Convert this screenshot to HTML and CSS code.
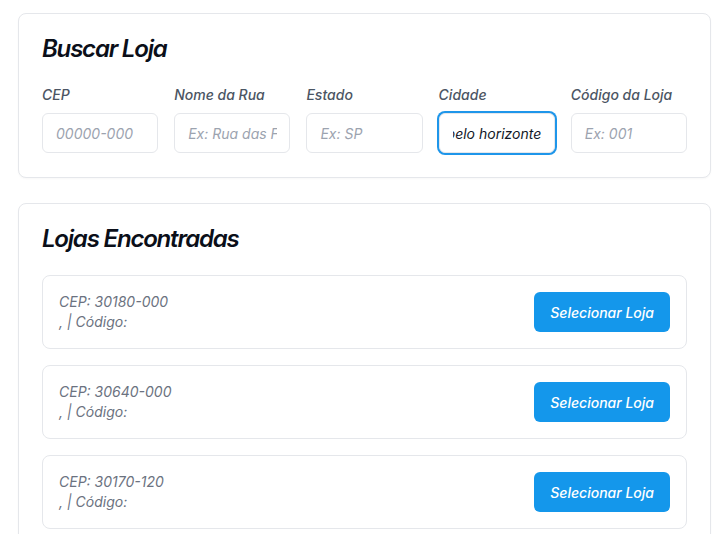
FILE: index.html
```html
<!DOCTYPE html>
<html lang="pt-BR">
<head>
<meta charset="utf-8">
<title>Buscar Loja</title>
<link rel="stylesheet" href="styles.css">
</head>
<body>
<main class="page">
  <section class="card">
    <h2 class="card-title">Buscar Loja</h2>
    <div class="fields">
      <label class="field">
        <span class="field-label">CEP</span>
        <input class="field-input" type="text" placeholder="00000-000">
      </label>
      <label class="field">
        <span class="field-label">Nome da Rua</span>
        <input class="field-input" type="text" placeholder="Ex: Rua das Flores">
      </label>
      <label class="field">
        <span class="field-label">Estado</span>
        <input class="field-input" type="text" placeholder="Ex: SP">
      </label>
      <label class="field">
        <span class="field-label">Cidade</span>
        <input class="field-input" id="cidade" type="text" value="belo horizonte">
      </label>
      <label class="field">
        <span class="field-label">Código da Loja</span>
        <input class="field-input" type="text" placeholder="Ex: 001">
      </label>
    </div>
  </section>

  <section class="card">
    <h2 class="card-title">Lojas Encontradas</h2>
    <ul class="stores">
      <li class="store">
        <div class="store-info">
          <div>CEP: 30180-000</div>
          <div>, | Código:</div>
        </div>
        <button class="store-btn" type="button">Selecionar Loja</button>
      </li>
      <li class="store">
        <div class="store-info">
          <div>CEP: 30640-000</div>
          <div>, | Código:</div>
        </div>
        <button class="store-btn" type="button">Selecionar Loja</button>
      </li>
      <li class="store">
        <div class="store-info">
          <div>CEP: 30170-120</div>
          <div>, | Código:</div>
        </div>
        <button class="store-btn" type="button">Selecionar Loja</button>
      </li>
    </ul>
  </section>
</main>
<script src="script.js"></script>
</body>
</html>
```

FILE: styles.css
```css
* { box-sizing: border-box; }

html, body {
  margin: 0;
  background: #ffffff;
}

body {
  font-family: Inter, "Noto Sans", sans-serif;
  font-style: italic;
  color: #111827;
  overflow: hidden;
}

.page {
  display: flex;
  flex-direction: column;
  gap: 25px;
  padding: 13px 11px 0 18px;
}

.card {
  background: #fff;
  border: 1px solid #e5e7eb;
  border-radius: 8px;
  padding: 23px 23px 24px 23px;
  box-shadow: 0 1px 2px rgba(0, 0, 0, 0.03);
}

.card-title {
  margin: 0 0 24px;
  font-size: 24px;
  line-height: 24px;
  font-weight: 600;
  font-style: italic;
  letter-spacing: -0.05em;
  color: #0b0f19;
}

.fields {
  display: grid;
  grid-template-columns: repeat(5, 1fr);
  gap: 16px;
}

.field {
  display: flex;
  flex-direction: column;
  gap: 8px;
  min-width: 0;
}

.field-label {
  font-size: 14px;
  line-height: 20px;
  font-weight: 500;
  color: #4b5563;
}

.field-input {
  width: 100%;
  height: 40px;
  padding: 0 12px 0 13px;
  border: 1px solid #e5e7eb;
  border-radius: 6px;
  font-family: inherit;
  font-style: italic;
  font-size: 14px;
  color: #111827;
  background: #fff;
  outline: none;
}

.field-input::placeholder {
  color: #9ca3af;
}

.field-input:focus {
  border-color: #e5e7eb;
  box-shadow: 0 0 0 2px #1e96ea;
}

.stores {
  list-style: none;
  margin: 0;
  padding: 0;
  display: flex;
  flex-direction: column;
  gap: 16px;
}

.store {
  display: flex;
  align-items: center;
  justify-content: space-between;
  padding: 16px;
  border: 1px solid #e5e7eb;
  border-radius: 8px;
}

.store-info {
  font-size: 14px;
  line-height: 20px;
  color: #6b7280;
}

.store-btn {
  height: 40px;
  padding: 0 16px;
  border: none;
  border-radius: 6px;
  background: #1497eb;
  color: #fff;
  font-family: inherit;
  font-style: italic;
  font-size: 14px;
  font-weight: 500;
  cursor: pointer;
}
```

FILE: script.js
```js
var input = document.getElementById('cidade');
input.focus();
input.setSelectionRange(input.value.length, input.value.length);
input.scrollLeft = input.scrollWidth;
```
